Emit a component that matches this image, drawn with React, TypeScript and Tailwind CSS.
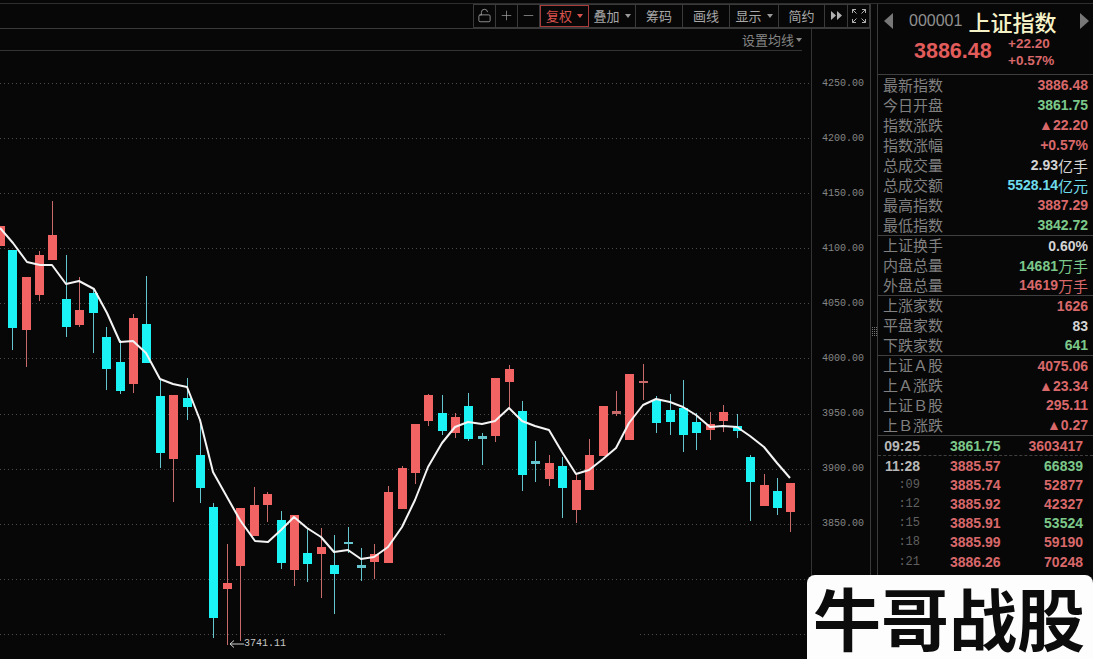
import { LockOpen, Plus, Minus } from "lucide-react";

const R = "#f26464";
const C = "#1af2f4";
const RW = "#c86a6a";
const CW = "#66c6d0";

type K = [number, number, number, number, number, "r" | "c"];
const candles: K[] = [
  [0, 226, 246, 226, 246, "r"],
  [12, 250, 328, 250, 350, "c"],
  [26, 277, 330, 277, 367, "r"],
  [39, 255, 295, 251, 301, "r"],
  [52, 235, 260, 201, 260, "r"],
  [66, 299, 327, 255, 337, "c"],
  [79, 310, 325, 277, 327, "r"],
  [93, 293, 313, 288, 353, "c"],
  [106, 337, 369, 327, 390, "c"],
  [120, 362, 391, 340, 394, "c"],
  [133, 318, 384, 314, 393, "r"],
  [146, 324, 363, 276, 363, "c"],
  [160, 396, 453, 380, 468, "c"],
  [173, 395, 459, 395, 502, "r"],
  [187, 398, 407, 378, 420, "c"],
  [200, 455, 488, 425, 503, "c"],
  [213, 507, 618, 503, 638, "c"],
  [227, 583, 589, 544, 645, "r"],
  [240, 508, 566, 508, 641, "r"],
  [254, 505, 536, 487, 536, "r"],
  [267, 494, 505, 492, 522, "r"],
  [281, 520, 563, 511, 569, "c"],
  [294, 515, 570, 515, 586, "r"],
  [307, 553, 564, 528, 582, "c"],
  [321, 547, 554, 528, 598, "r"],
  [334, 565, 574, 535, 614, "c"],
  [348, 542, 544, 527, 553, "c"],
  [361, 565, 568, 548, 581, "c"],
  [374, 554, 562, 544, 579, "r"],
  [388, 492, 563, 486, 563, "r"],
  [402, 468, 509, 466, 509, "r"],
  [415, 424, 473, 424, 484, "r"],
  [428, 395, 421, 394, 426, "r"],
  [442, 413, 431, 395, 435, "c"],
  [455, 417, 433, 413, 438, "r"],
  [468, 406, 439, 393, 441, "c"],
  [482, 436, 439, 433, 465, "c"],
  [495, 378, 436, 378, 442, "r"],
  [509, 369, 382, 365, 408, "r"],
  [522, 411, 475, 401, 491, "c"],
  [535, 461, 464, 441, 482, "c"],
  [549, 463, 479, 455, 486, "r"],
  [562, 466, 488, 457, 518, "c"],
  [576, 480, 510, 475, 523, "r"],
  [589, 455, 490, 439, 490, "r"],
  [603, 406, 456, 406, 456, "r"],
  [616, 411, 414, 391, 416, "r"],
  [629, 374, 440, 374, 440, "r"],
  [643, 381, 383, 364, 400, "r"],
  [656, 400, 423, 396, 433, "c"],
  [670, 410, 422, 394, 435, "c"],
  [683, 408, 435, 380, 452, "c"],
  [696, 422, 433, 413, 450, "c"],
  [710, 424, 430, 412, 440, "r"],
  [723, 412, 421, 405, 432, "r"],
  [737, 426, 431, 414, 438, "c"],
  [750, 457, 482, 455, 521, "c"],
  [764, 485, 506, 474, 506, "r"],
  [777, 491, 508, 478, 515, "c"],
  [790, 483, 512, 483, 532, "r"],
];

const ma =
  "0,228 13,243 27,262 40,265 52,265 66,284 79,281 94,289 107,313 120,342 133,341 146,353 160,379 173,384 187,387 200,420 213,472 227,497 240,520 255,541 268,542 281,530 294,517 307,528 321,537 334,552 348,550 361,559 374,557 388,547 402,527 415,500 428,467 442,443 455,427 468,422 482,424 495,421 509,408 522,421 535,426 549,430 562,452 576,474 589,470 603,459 616,448 629,423 643,405 656,399 670,402 683,407 696,415 710,427 723,426 737,427 750,436 764,447 777,463 790,478";

const grid = [83, 138, 193, 248, 303, 358, 414, 469, 524, 579];
const axis = ["4250.00", "4200.00", "4150.00", "4100.00", "4050.00", "4000.00", "3950.00", "3900.00", "3850.00"];

const cjk = "font-['Noto_Sans_CJK_SC',sans-serif]";
const num = "font-['Liberation_Sans',sans-serif] font-bold";

function Caret({ color = "#9a9a9a" }: { color?: string }) {
  return (
    <svg width="6" height="4" viewBox="0 0 6 4" className="ml-[5px] shrink-0">
      <path d="M0 0H6L3 4Z" fill={color} />
    </svg>
  );
}

function Cell({ w, children, active }: { w: string; children: React.ReactNode; active?: boolean }) {
  return (
    <div
      className={`${w} h-full flex items-center justify-center shrink-0 pb-px ${
        active ? "border border-[#a83c3c] text-[#d8524e]" : "border-r border-[#3a3a3a] text-[#a8a8a8]"
      }`}
    >
      {children}
    </div>
  );
}

function Toolbar() {
  return (
    <div className="h-6 flex justify-end">
      <div className={`h-full flex border border-[#3a3a3a] text-[13px] leading-none ${cjk}`}>
        <Cell w="w-[22px]">
          <LockOpen size={15} strokeWidth={1.3} />
        </Cell>
        <Cell w="w-[22px]">
          <Plus size={15} strokeWidth={1.1} />
        </Cell>
        <Cell w="w-[22px]">
          <Minus size={15} strokeWidth={1.1} />
        </Cell>
        <Cell w="w-[49px]" active>
          复权
          <Caret color="#d8524e" />
        </Cell>
        <Cell w="w-[47px]">
          叠加
          <Caret />
        </Cell>
        <Cell w="w-[47px]">筹码</Cell>
        <Cell w="w-[47px]">画线</Cell>
        <Cell w="w-[49px]">
          显示
          <Caret />
        </Cell>
        <Cell w="w-[46px]">简约</Cell>
        <Cell w="w-[23px]">
          <svg width="11" height="9" viewBox="0 0 11 9">
            <path d="M0 0L5 4.5L0 9Z M6 0L11 4.5L6 9Z" fill="#b0b0b0" />
          </svg>
        </Cell>
        <div className="w-[21px] h-full flex items-center justify-center">
          <svg width="14" height="14" viewBox="0 0 14 14" fill="none" stroke="#b0b0b0" strokeWidth="1">
            <path d="M0.5 4V0.5H4M0.5 0.5L4.5 4.5M10 0.5H13.5V4M13.5 0.5L9.5 4.5M0.5 10V13.5H4M0.5 13.5L4.5 9.5M13.5 10V13.5H10M13.5 13.5L9.5 9.5" />
          </svg>
        </div>
      </div>
    </div>
  );
}

function Chart() {
  return (
    <div className="flex-1 relative">
      <div className="h-[22px] mr-[9px] border-b border-[#333] flex items-center justify-end">
        <span className={`text-[13px] leading-none text-[#858585] ${cjk}`}>设置均线</span>
        <svg width="6" height="4" viewBox="0 0 6 4" className="ml-[2px] shrink-0">
          <path d="M0 0H6L3 4Z" fill="#858585" />
        </svg>
      </div>
      <svg width="811" height="608" viewBox="0 51 811 608" className="block">
        <g stroke="#4a4a4a" strokeWidth="1" strokeDasharray="1 3">
          {grid.map((y) => (
            <line key={y} x1="0" x2="811" y1={y + 0.5} y2={y + 0.5} />
          ))}
          <line x1="0" x2="448" y1="634.5" y2="634.5" />
          <line x1="640" x2="811" y1="634.5" y2="634.5" />
        </g>
        <g shapeRendering="crispEdges">
          {candles.map(([x, t, b, wt, wb, c]) => (
            <g key={x}>
              <rect x={x} y={wt} width="1" height={wb - wt} fill={c === "r" ? RW : CW} />
              <rect
                x={x - 4}
                y={t}
                width="9"
                height={b - t}
                fill={b - t < 5 ? (c === "r" ? RW : CW) : c === "r" ? R : C}
              />
            </g>
          ))}
        </g>
        <polyline points={ma} fill="none" stroke="#f4f4f4" strokeWidth="2" strokeLinejoin="round" />
      </svg>
      <div className="absolute left-[229px] top-[610px] flex items-center text-[#c8c8c8] font-['Liberation_Mono',monospace] text-[10px] leading-none">
        <svg width="15" height="8" viewBox="0 0 15 8" fill="none" stroke="#d0d0d0" strokeWidth="1">
          <path d="M15 4H1M5 0.5L1 4L5 7.5" />
        </svg>
        <span>3741.11</span>
      </div>
    </div>
  );
}

function Axis() {
  return (
    <div className="w-[59px] border-l border-[#333] pt-[27px] pl-[10px] font-['Liberation_Mono',monospace] text-[10px] text-[#858585]">
      {axis.map((a) => (
        <div key={a} className="h-[55.1px] flex items-center leading-none">
          {a}
        </div>
      ))}
    </div>
  );
}

type RowT = { l: string; v: string; c: string; u?: string };

function Row({ l, v, c, u }: RowT) {
  return (
    <div className="flex-1 flex items-center justify-between pl-[5px] pr-[5px]">
      <span className={`text-[15px] leading-none pb-[2px] text-[#808080] ${cjk}`}>{l}</span>
      <span className="flex items-center leading-none">
        <span className={`text-[14px] ${num}`} style={{ color: c }}>
          {v}
        </span>
        {u && (
          <span className={`text-[15px] ${cjk}`} style={{ color: c }}>
            {u}
          </span>
        )}
      </span>
    </div>
  );
}

const red = "#d8686a";
const green = "#7cc88a";
const white = "#d4d4d4";
const cyan = "#6fdcec";

const sections: { h: string; rows: RowT[] }[] = [
  {
    h: "h-[161px]",
    rows: [
      { l: "最新指数", v: "3886.48", c: red },
      { l: "今日开盘", v: "3861.75", c: green },
      { l: "指数涨跌", v: "▲22.20", c: red },
      { l: "指数涨幅", v: "+0.57%", c: red },
      { l: "总成交量", v: "2.93", c: white, u: "亿手" },
      { l: "总成交额", v: "5528.14", c: cyan, u: "亿元" },
      { l: "最高指数", v: "3887.29", c: red },
      { l: "最低指数", v: "3842.72", c: green },
    ],
  },
  {
    h: "h-[60px]",
    rows: [
      { l: "上证换手", v: "0.60%", c: white },
      { l: "内盘总量", v: "14681", c: green, u: "万手" },
      { l: "外盘总量", v: "14619", c: red, u: "万手" },
    ],
  },
  {
    h: "h-[60px]",
    rows: [
      { l: "上涨家数", v: "1626", c: red },
      { l: "平盘家数", v: "83", c: white },
      { l: "下跌家数", v: "641", c: green },
    ],
  },
  {
    h: "h-[80px]",
    rows: [
      { l: "上证Ａ股", v: "4075.06", c: red },
      { l: "上Ａ涨跌", v: "▲23.34", c: red },
      { l: "上证Ｂ股", v: "295.11", c: red },
      { l: "上Ｂ涨跌", v: "▲0.27", c: red },
    ],
  },
];

const ticks = [
  { t: ":09", p: "3885.74", v: "52877", vc: red },
  { t: ":12", p: "3885.92", v: "42327", vc: red },
  { t: ":15", p: "3885.91", v: "53524", vc: green },
  { t: ":18", p: "3885.99", v: "59190", vc: red },
  { t: ":21", p: "3886.26", v: "70248", vc: red },
];

function Tick({ t, p, pc, v, vc, main }: { t: string; p: string; pc: string; v: string; vc: string; main?: boolean }) {
  return (
    <div className="h-[19.2px] flex items-center leading-none">
      <span
        className={`w-[36px] ml-[6px] mr-[30px] text-right ${
          main
            ? `text-[14px] text-[#b8b8b8] ${num}`
            : "text-[12px] text-[#606060] font-['Liberation_Mono',monospace]"
        }`}
      >
        {t}
      </span>
      <span className={`w-[51px] text-[14px] ${num}`} style={{ color: pc }}>
        {p}
      </span>
      <span className={`flex-1 pr-[10px] text-right text-[14px] ${num}`} style={{ color: vc }}>
        {v}
      </span>
    </div>
  );
}

function Side() {
  return (
    <div className="flex-1 border-l border-[#3a3a3a] flex flex-col">
      <div className="h-[71px] flex flex-col border-b border-[#3f3f3f]">
        <div className="h-[33px] flex items-center">
          <svg width="9" height="16" viewBox="0 0 9 16" className="ml-[6px] mr-[16px]">
            <path d="M9 0V16L0 8Z" fill="#777" />
          </svg>
          <span className="text-[16px] text-[#909090] font-['Liberation_Sans',sans-serif] leading-none">000001</span>
          <span className={`ml-[6px] text-[22px] leading-none font-medium text-[#f6f2c8] ${cjk}`}>上证指数</span>
          <svg width="9" height="16" viewBox="0 0 9 16" className="ml-[24px]">
            <path d="M0 0V16L9 8Z" fill="#777" />
          </svg>
        </div>
        <div className="flex items-center">
          <span className="ml-[36px] w-[94px] text-[21.5px] font-bold leading-none text-[#e25c5c] font-['Liberation_Sans',sans-serif]">
            3886.48
          </span>
          <div className="flex flex-col gap-[4px] text-[13.5px] font-bold leading-[13px] text-[#d8686a] font-['Liberation_Sans',sans-serif]">
            <span>+22.20</span>
            <span>+0.57%</span>
          </div>
        </div>
      </div>
      {sections.map((s, i) => (
        <div key={i} className={`${s.h} flex flex-col border-b border-[#3f3f3f]`}>
          {s.rows.map((r) => (
            <Row key={r.l} {...r} />
          ))}
        </div>
      ))}
      <div className="h-5 flex items-center border-b border-dashed border-[#3f3f3f]">
        <div className="w-full">
          <Tick t="09:25" p="3861.75" pc={green} v="3603417" vc={red} main />
        </div>
      </div>
      <Tick t="11:28" p="3885.57" pc={red} v="66839" vc={green} main />
      {ticks.map((t) => (
        <Tick key={t.t} t={t.t} p={t.p} pc={red} v={t.v} vc={t.vc} />
      ))}
    </div>
  );
}

export default function App() {
  return (
    <div className="relative w-[1093px] h-[659px] overflow-hidden bg-[#070707] pt-[4px]">
      <div className="h-px -mt-px bg-[#2e2e2e]" />
      <div className="flex h-[655px]">
        <div className="w-[871px] flex flex-col border-r border-[#3a3a3a]">
          <Toolbar />
          <div className="flex flex-1 border-t border-[#3a3a3a]">
            <Chart />
            <Axis />
          </div>
        </div>
        <div className="w-[6px] flex items-center justify-center">
          <svg width="5" height="9" viewBox="0 0 5 9" fill="#777">
            {[0, 2, 4, 6, 8].map((y) =>
              [0, 2, 4].map((x) => <rect key={`${x}-${y}`} x={x} y={y} width="1" height="1" />),
            )}
          </svg>
        </div>
        <Side />
      </div>
      <div className="absolute right-0 bottom-0 w-[286px] h-[84px] rounded-t-[8px] bg-[#fdfdfd] flex items-center justify-center">
        <span className={`text-[68px] leading-none font-bold text-[#0c0c0c] -ml-[2px] ${cjk}`}>牛哥战股</span>
      </div>
    </div>
  );
}
